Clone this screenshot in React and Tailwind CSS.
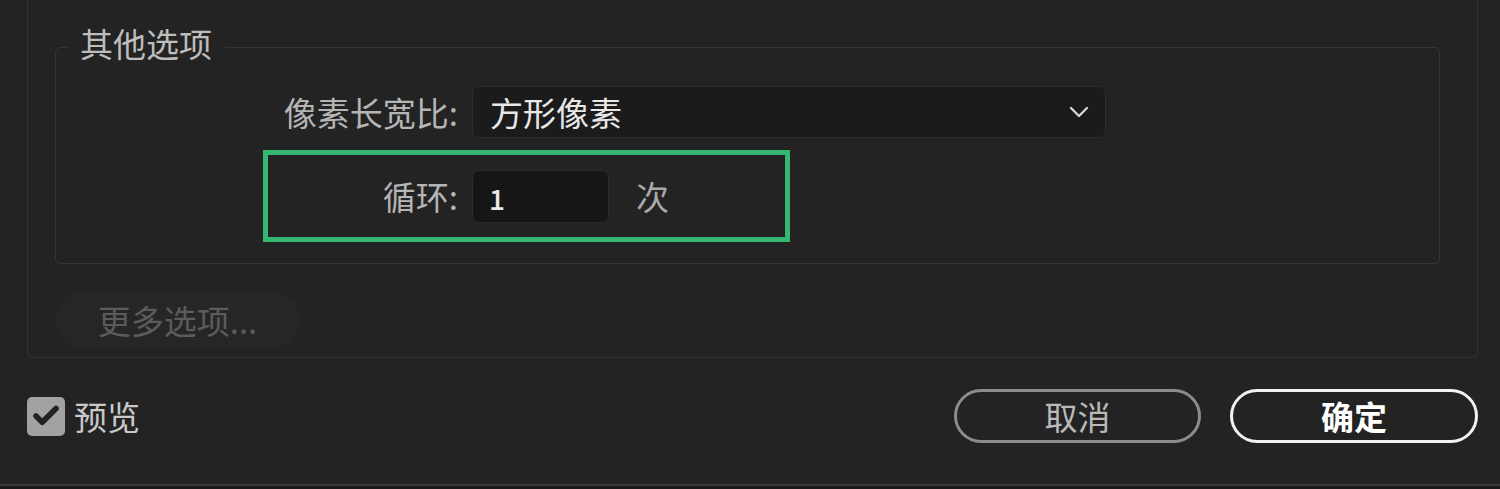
import { Check } from 'lucide-react';

const font = { fontFamily: '"Noto Sans CJK SC", "Noto Sans", sans-serif' };

function Chevron() {
  return (
    <svg width="20" height="12" viewBox="0 0 20 12" fill="none">
      <polyline points="2,2 10,10 18,2" stroke="#dcdcdc" strokeWidth="2.2" strokeLinecap="round" strokeLinejoin="round" />
    </svg>
  );
}

export default function App() {
  return (
    <div className="w-[1500px] h-[489px] bg-[#232323] overflow-hidden flex flex-col" style={font}>
      {/* outer panel, top edge is cut off */}
      <div className="ml-[27px] w-[1451px] border-x border-b border-[#323232] rounded-b-[6px] pt-[47px] pl-[27px] pb-[10px]">
        <div className="relative w-[1385px] border border-[#353535] rounded-[5px] pt-[38px] pb-[21px]">
          <div className="absolute -top-[21px] left-[11px] px-[13px] bg-[#232323] text-[33px] leading-none text-[#bdbdbd]">
            其他选项
          </div>

          <div className="flex items-center">
            <div className="w-[402px] text-right text-[33px] leading-none text-[#b5b5b5]">像素长宽比:</div>
            <div className="ml-[14px] w-[634px] h-[52px] rounded-[7px] bg-[#1b1b1b] border border-[#2e2e2e] flex items-center justify-between pl-[17px] pr-[16px]">
              <span className="text-[33px] leading-none text-[#e8e8e8]">方形像素</span>
              <Chevron />
            </div>
          </div>

          <div className="mt-[12px] ml-[207px] w-[527px] h-[92px] border-[5px] border-[#36b872] flex items-center">
            <div className="w-[190px] text-right text-[33px] leading-none text-[#b5b5b5]">循环:</div>
            <div className="ml-[14px] w-[137px] h-[53px] rounded-[7px] bg-[#161616] border border-[#2c2c2c] flex items-center pl-[16px]">
              <span className="text-[28px] leading-none font-medium text-[#e8e8e8] mt-[4px]">1</span>
            </div>
            <span className="ml-[27px] text-[33px] leading-none text-[#a9a9a9]">次</span>
          </div>
        </div>

        <button className="mt-[29px] w-[245px] h-[54px] rounded-full bg-[#262626] text-[33px] leading-none text-[#5b5b5b] flex items-center justify-center">
          更多选项...
        </button>
      </div>

      <div className="mt-[31px] flex items-center h-[54px]">
        <div className="ml-[27px] w-[38px] h-[39px] rounded-[5px] bg-[#a2a2a2] flex items-center justify-center">
          <Check size={30} strokeWidth={4.5} color="#222222" />
        </div>
        <span className="ml-[9px] text-[33px] leading-none text-[#c9c9c9]">预览</span>

        <button className="ml-auto w-[247px] h-[54px] rounded-full border-[3px] border-[#8c8c8c] text-[33px] leading-none text-[#b9b9b9] flex items-center justify-center">
          取消
        </button>
        <button className="ml-[29px] mr-[22px] w-[248px] h-[54px] rounded-full border-[3px] border-[#f2f2f2] text-[33px] leading-none font-bold text-white flex items-center justify-center">
          确定
        </button>
      </div>

      <div className="mt-auto h-[5px] border-t-2 border-[#383838] bg-[#1a1a1a]" />
    </div>
  );
}
